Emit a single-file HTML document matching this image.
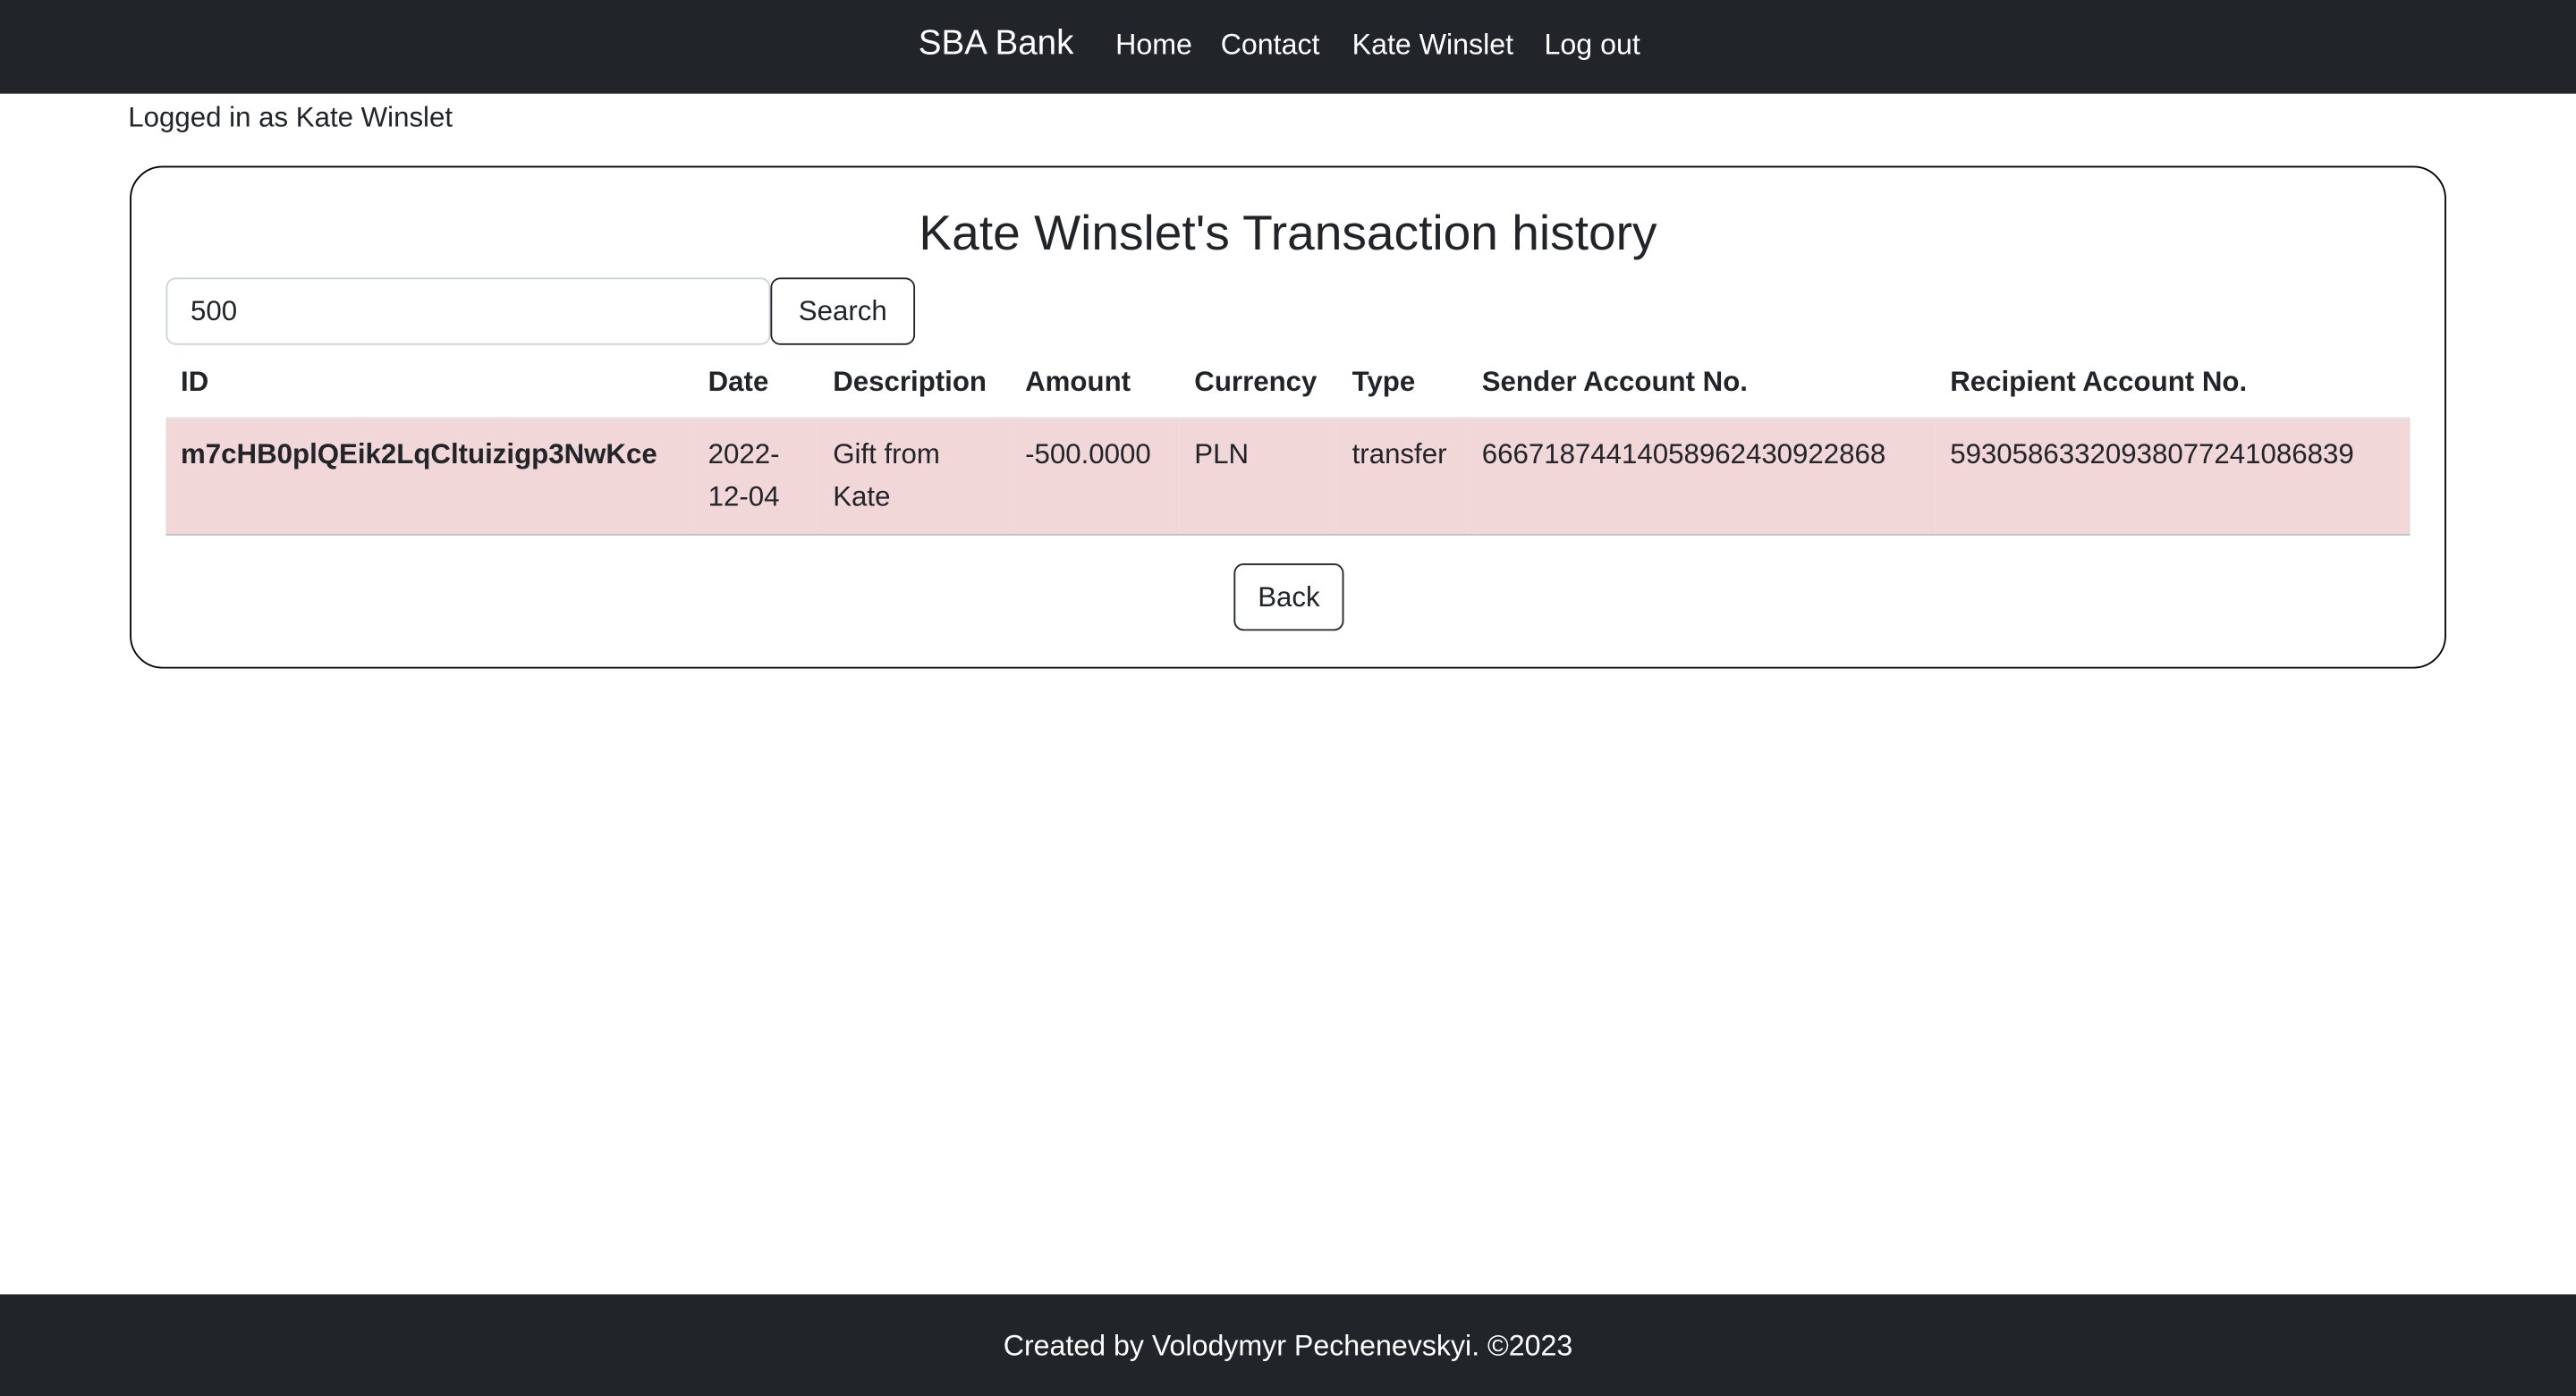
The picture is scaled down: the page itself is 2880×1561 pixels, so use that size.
<!DOCTYPE html>
<html><head><meta charset="utf-8"><style>
html,body{margin:0;padding:0;background:#fff;overflow:hidden;}
body{width:2880px;height:1560px;}
#w{position:absolute;left:0;top:0;width:1568px;height:850px;transform:scale(1.836735);transform-origin:0 0;font-family:"Liberation Sans",Arial,sans-serif;color:#212529;font-size:17px;}
.nav{position:absolute;left:0;top:0;width:1568px;height:57px;background:#212529;color:#fff;}
.nav span{position:absolute;top:17px;font-size:17.5px;}
.brand{font-size:21px!important;top:15px!important;}
.logged{position:absolute;left:78px;top:62px;}
.card{position:absolute;left:79px;top:101px;width:1408px;height:304px;border:1.5px solid #000;border-radius:20px;}
h1{position:absolute;left:0;width:100%;top:24px;margin:0;text-align:center;font-size:30px;font-weight:500;}
.inp{position:absolute;left:21px;top:67px;width:366px;height:39px;border:1px solid #ced4da;border-radius:6px;}
.inp span{position:absolute;left:14px;top:10px;}
.btn{position:absolute;border:1.5px solid #212529;border-radius:6px;height:38px;box-sizing:border-box;text-align:center;line-height:36px;}
table{position:absolute;left:21px;top:120px;width:1366px;border-collapse:collapse;table-layout:fixed;}
th{text-align:left;padding:0 9px 10px;font-weight:bold;line-height:22px;}
td{vertical-align:top;padding:9px 9px 9px;line-height:26px;background:#f2d7d9;border-bottom:1px solid #c8c0c1;border-top:1px solid #dee2e6;white-space:nowrap;}
.foot{position:absolute;left:0;top:788px;width:1568px;height:62px;background:#212529;color:#fff;text-align:center;line-height:62px;font-size:17.5px;}
</style></head><body><div id="w">
<div class="nav"><span class="brand" style="left:559px">SBA Bank</span><span style="left:679px">Home</span><span style="left:743px">Contact</span><span style="left:823px">Kate Winslet</span><span style="left:940px">Log out</span></div>
<div class="logged">Logged in as Kate Winslet</div>
<div class="card">
<h1>Kate Winslet's Transaction history</h1>
<div class="inp"><span>500</span></div>
<div class="btn" style="left:389px;top:67px;width:88px;height:41px;line-height:39px">Search</div>
<table><colgroup><col style="width:321px"><col style="width:76px"><col style="width:117px"><col style="width:103px"><col style="width:96px"><col style="width:79px"><col style="width:285px"><col style="width:289px"></colgroup>
<tr><th>ID</th><th>Date</th><th>Description</th><th>Amount</th><th>Currency</th><th>Type</th><th>Sender Account No.</th><th>Recipient Account No.</th></tr>
<tr><td style="font-weight:bold">m7cHB0plQEik2LqCltuizigp3NwKce</td><td style="white-space:normal">2022-<br>12-04</td><td>Gift from<br>Kate</td><td>-500.0000</td><td>PLN</td><td>transfer</td><td>66671874414058962430922868</td><td>59305863320938077241086839</td></tr>
</table>
<div class="btn" style="left:671px;top:241px;width:67px;height:41px;line-height:39px">Back</div>
</div>
<div class="foot">Created by Volodymyr Pechenevskyi. ©2023</div>
</div></body></html>
